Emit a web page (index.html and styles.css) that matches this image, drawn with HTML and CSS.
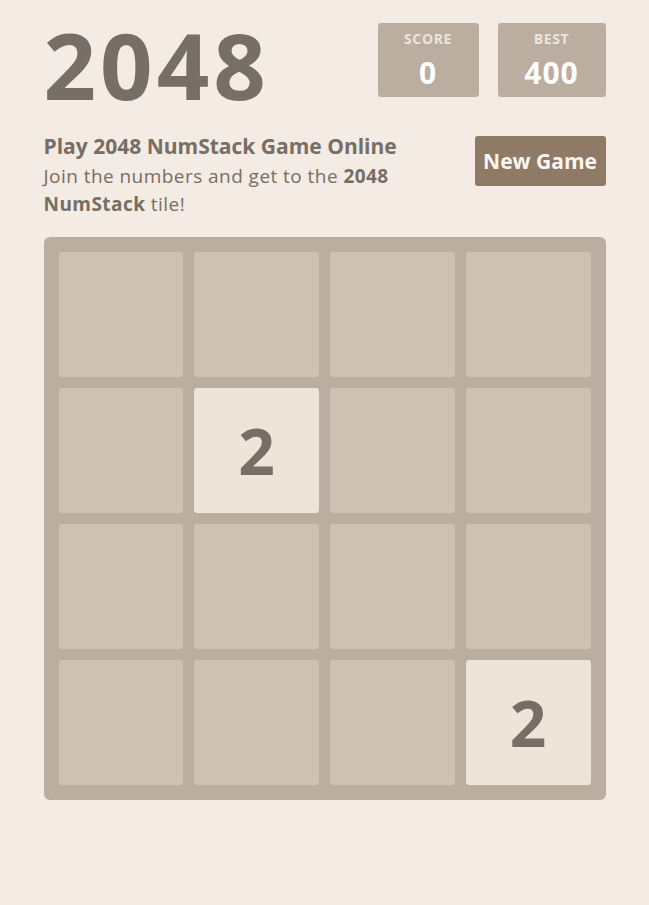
FILE: index.html
```html
<!DOCTYPE html>
<html lang="en">
<head>
<meta charset="utf-8">
<title>2048 NumStack</title>
<link rel="stylesheet" href="styles.css">
</head>
<body>
<div class="container">
  <div class="heading">
    <h1 class="title">2048</h1>
    <div class="scores">
      <div class="score-box score"><span class="label">SCORE</span><span class="value">0</span></div>
      <div class="score-box best"><span class="label">BEST</span><span class="value">400</span></div>
    </div>
  </div>
  <div class="intro">
    <div class="intro-text">
      <h2 class="subtitle">Play 2048 NumStack Game Online</h2>
      <p class="desc">Join the numbers and get to the <strong>2048 NumStack</strong> tile!</p>
    </div>
    <button class="new-game">New Game</button>
  </div>
  <div class="board">
    <div class="cell"></div><div class="cell"></div><div class="cell"></div><div class="cell"></div>
    <div class="cell"></div><div class="cell tile-2">2</div><div class="cell"></div><div class="cell"></div>
    <div class="cell"></div><div class="cell"></div><div class="cell"></div><div class="cell"></div>
    <div class="cell"></div><div class="cell"></div><div class="cell"></div><div class="cell tile-2">2</div>
  </div>
</div>
</body>
</html>
```
FILE: styles.css
```css
html, body {
  margin: 0;
  padding: 0;
  background: #f3ebe4;
  color: #776e65;
  font-family: "Open Sans", "Noto Sans", sans-serif;
}
.container {
  width: 562px;
  margin: 0 auto;
  padding-top: 16px;
}
.heading {
  display: flex;
  justify-content: space-between;
  align-items: flex-start;
}
.title {
  margin: 0;
  font-size: 92px;
  font-weight: 700;
  line-height: 98px;
  letter-spacing: 4px;
  color: #776e65;
}
.scores {
  display: flex;
  gap: 19px;
  margin-top: 7px;
}
.score-box {
  background: #bbada0;
  border-radius: 3px;
  height: 74px;
  display: flex;
  flex-direction: column;
  align-items: center;
  box-sizing: border-box;
  padding-top: 6px;
}
.score { width: 101px; }
.best { width: 108px; }
.label {
  font-size: 14px;
  font-weight: 700;
  color: #eee4da;
  line-height: 20px;
  letter-spacing: 0.6px;
}
.value {
  margin-top: 4px;
  font-size: 30px;
  font-weight: 700;
  color: #fff;
  line-height: 40px;
  letter-spacing: 1px;
}
.intro {
  display: flex;
  justify-content: space-between;
  align-items: flex-start;
  margin-top: 18px;
}
.subtitle {
  margin: 0;
  font-size: 21px;
  font-weight: 700;
  line-height: 29px;
}
.desc {
  margin: 1px 0 0;
  font-size: 19px;
  line-height: 28px;
  letter-spacing: 0.45px;
  width: 400px;
}
.desc strong { font-weight: 700; }
.new-game {
  background: #8f7a66;
  color: #f9f6f2;
  border: none;
  border-radius: 3px;
  width: 131px;
  height: 50px;
  font-family: inherit;
  font-size: 21px;
  font-weight: 700;
  padding: 0;
  margin-top: 4px;
}
.board {
  margin-top: 19px;
  background: #bbada0;
  border-radius: 6px;
  padding: 15px;
  display: grid;
  grid-template-columns: repeat(4, 1fr);
  grid-auto-rows: 125px;
  gap: 11px;
}
.cell {
  background: #cdc1b4;
  border-radius: 3px;
}
.tile-2 {
  background: #eee4da;
  color: #776e65;
  display: flex;
  align-items: center;
  justify-content: center;
  font-size: 64px;
  font-weight: 700;
}
```
